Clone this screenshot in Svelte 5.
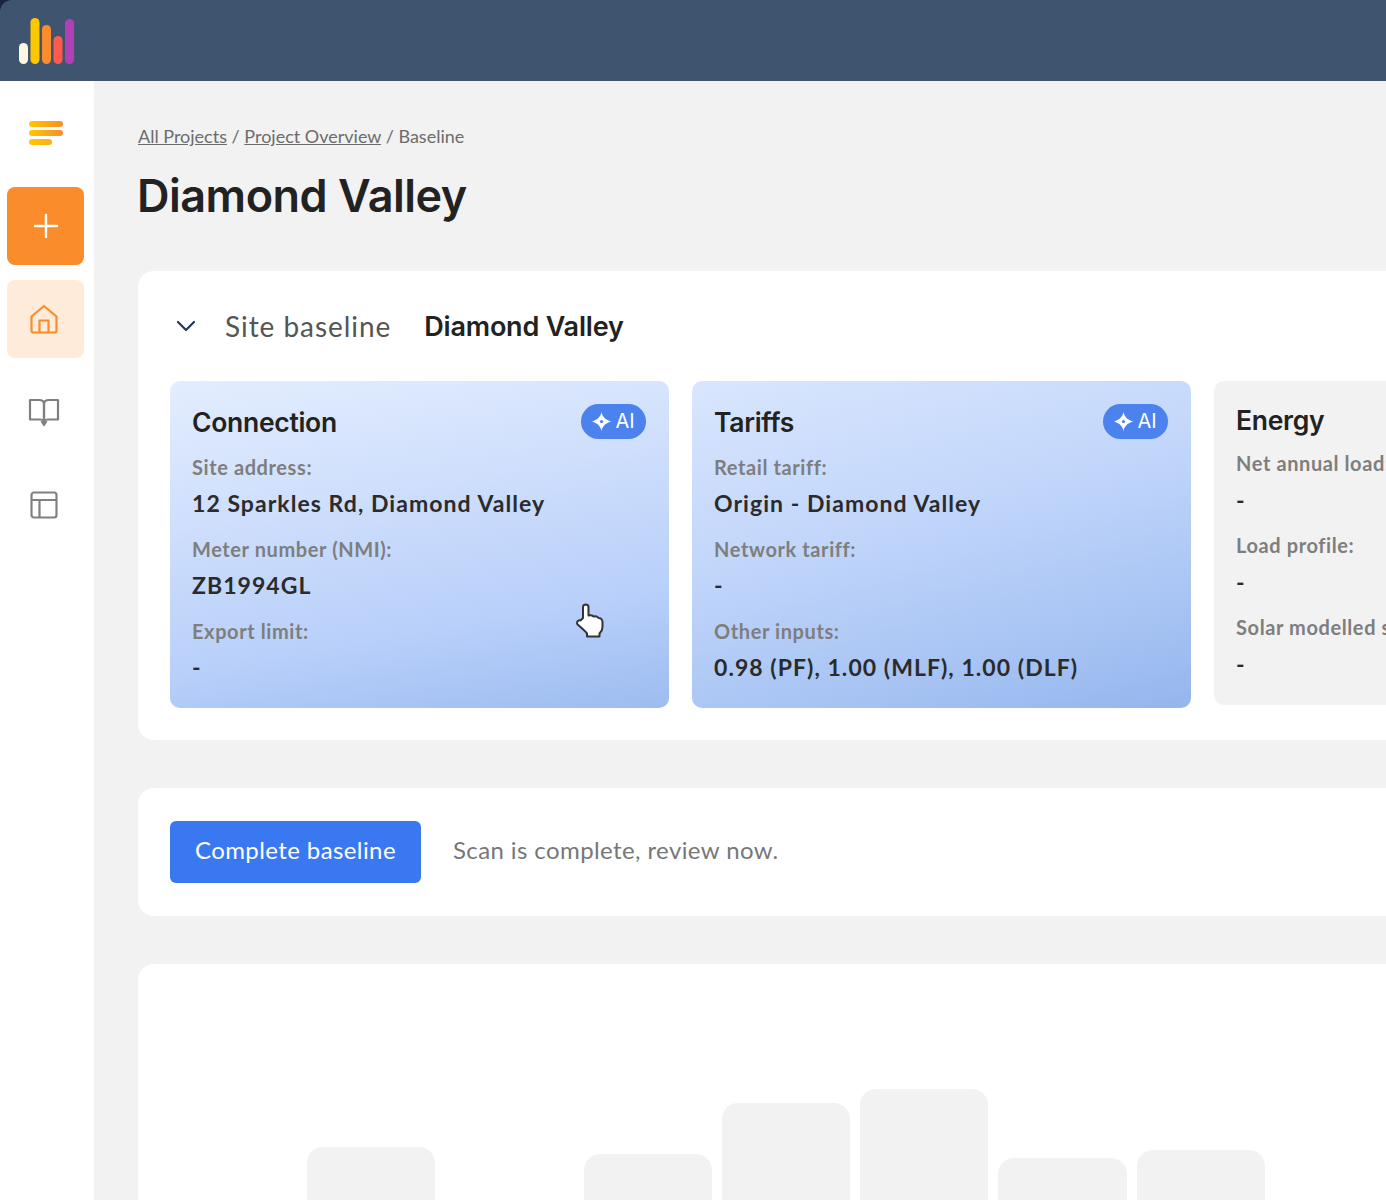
<script lang="ts">
	const cards = [
		{
			title: 'Connection',
			ai: true,
			rows: [
				['Site address:', '12 Sparkles Rd, Diamond Valley'],
				['Meter number (NMI):', 'ZB1994GL'],
				['Export limit:', '-']
			]
		},
		{
			title: 'Tariffs',
			ai: true,
			rows: [
				['Retail tariff:', 'Origin - Diamond Valley'],
				['Network tariff:', '-'],
				['Other inputs:', '0.98 (PF), 1.00 (MLF), 1.00 (DLF)']
			]
		},
		{
			title: 'Energy',
			ai: false,
			rows: [
				['Net annual load:', '-'],
				['Load profile:', '-'],
				['Solar modelled size:', '-']
			]
		}
	];

	// tops of the placeholder bars are measured from the chart floor
	const bars = [153, 0, 146, 197, 211, 142, 150];
</script>

<div class="page">
	<header class="topbar">
		<svg class="logo" width="56" height="46" viewBox="0 0 56 46">
			<rect x="0" y="25" width="9" height="21" rx="4.5" fill="#fdf6e3" />
			<rect x="11.500" y="0" width="9" height="46" rx="4.5" fill="#ffc700" />
			<rect x="23" y="7" width="9" height="39" rx="4.500" fill="#fb8c2b" />
			<rect x="34.500" y="18" width="9" height="28" rx="4.500" fill="#ff5a4d" />
			<rect x="46" y="1" width="9" height="45" rx="4.500" fill="#b13fb5" />
		</svg>
	</header>

	<div class="body">
		<nav class="sidebar">
			<div class="menu">
				<span></span>
				<span></span>
				<span class="short"></span>
			</div>
			<button class="side-btn add" aria-label="Add">
				<svg width="26" height="26" viewBox="0 0 26 26" fill="none" stroke="#fff" stroke-width="2.400" stroke-linecap="round">
					<path d="M13 2v22M2 13h22" />
				</svg>
			</button>
			<button class="side-btn home" aria-label="Home">
				<svg width="30" height="32" viewBox="0 0 30 32" fill="none" stroke="#fb8c2b" stroke-width="2.200" stroke-linejoin="round">
					<path d="M2.500 13.500 15 3l12.500 10.500v14a2 2 0 0 1-2 2h-21a2 2 0 0 1-2-2z" />
					<path d="M10.500 29.500V17.500h9v12" />
				</svg>
			</button>
			<button class="side-btn plain" aria-label="Guide">
				<svg width="32" height="30" viewBox="0 0 32 30" fill="none" stroke="#808080" stroke-width="2.200" stroke-linejoin="round">
					<path d="M2 3h9c3 0 5 1.500 5 4v18c0-1.500-2-2.500-4-2.500H2z" />
					<path d="M30 3h-9c-3 0-5 1.500-5 4v18c0-1.500 2-2.500 4-2.500h10z" />
					<path d="M13.500 24 16 28l2.500-4" />
				</svg>
			</button>
			<button class="side-btn plain" aria-label="Layout">
				<svg width="30" height="30" viewBox="0 0 30 30" fill="none" stroke="#808080" stroke-width="2.200">
					<rect x="2.500" y="2.500" width="25" height="25" rx="2.500" />
					<path d="M2.500 10h25M10.500 10v17.500" />
				</svg>
			</button>
		</nav>

		<main class="main">
			<p class="crumbs"><a href="#top">All Projects</a> / <a href="#top">Project Overview</a> / Baseline</p>
			<h1>Diamond Valley</h1>

			<section class="panel baseline">
				<div class="baseline-head">
					<svg width="20" height="12" viewBox="0 0 20 12" fill="none" stroke="#22395a" stroke-width="2.200" stroke-linecap="round" stroke-linejoin="round">
						<path d="M2 2l8 8 8-8" />
					</svg>
					<span class="label">Site baseline</span>
					<span class="site">Diamond Valley</span>
				</div>

				<div class="cards">
					{#each cards as card}
						<article class="card" class:blue={card.ai}>
							<div class="card-head">
								<h2>{card.title}</h2>
								{#if card.ai}
									<span class="ai">
										<svg width="19" height="19" viewBox="0 0 19 19">
											<path fill="#fff" d="M9.500 0c1 4.800 3.500 7.500 9.500 9.500-6 2-8.500 4.700-9.500 9.500-1-4.800-3.500-7.500-9.500-9.500 6-2 8.500-4.700 9.500-9.500z" />
											<circle cx="9.500" cy="9.500" r="1.600" fill="#4b82ee" />
										</svg>
										AI
									</span>
								{/if}
							</div>
							{#each card.rows as row}
								<div class="field">{row[0]}</div>
								<div class="value">{row[1]}</div>
							{/each}
						</article>
					{/each}
				</div>

				<svg class="cursor" width="30" height="36" viewBox="0 0 30 36" stroke="#333" stroke-width="2" stroke-linejoin="round" fill="#fff">
					<path d="M8 4c0-3.500 5.500-3.500 5.500 0v8.500c2.500-.5 4 0 5 1 2-.5 4 0 5 1.500 2 0 4 1.500 4 4v5c0 3-1.500 5-3 6.500v3H12v-3c-3-3.500-6-6-9.500-9-1.500-2 .5-5 3-4L8 15z" />
				</svg>
			</section>

			<section class="panel action">
				<button class="primary">Complete baseline</button>
				<span class="note">Scan is complete, review now.</span>
			</section>

			<section class="panel chart">
				{#each bars as h}
					<div class="bar" style="height: {h}px"></div>
				{/each}
			</section>
		</main>
	</div>
</div>

<style>
	:global(body) {
		margin: 0;
	}

	.page {
		width: 1386px;
		height: 1200px;
		overflow: hidden;
		background: #1b2342;
		font-family: Lato, 'Open Sans', sans-serif;
		color: #222;
	}

	.topbar {
		height: 81px;
		background: #3f556f;
		border-top-left-radius: 12px;
		display: flex;
		align-items: flex-start;
		padding: 18px 0 0 19px;
		box-sizing: border-box;
	}

	.body {
		display: flex;
		height: 1119px;
	}

	.sidebar {
		width: 94px;
		flex: none;
		background: #fff;
		display: flex;
		flex-direction: column;
		align-items: center;
		padding-top: 40px;
		box-sizing: border-box;
	}

	.menu {
		width: 34px;
		height: 24px;
		margin: 0 3px 42px 0;
		display: flex;
		flex-direction: column;
		gap: 3px;
	}

	.menu span {
		height: 6px;
		border-radius: 3px;
		background: linear-gradient(90deg, #ffc700, #fb8c2b);
	}

	.menu .short {
		width: 23px;
		background: linear-gradient(90deg, #ffc700, #fcae1c);
	}

	.side-btn {
		width: 77px;
		height: 78px;
		border: 0;
		padding: 0;
		border-radius: 8px;
		display: flex;
		align-items: center;
		justify-content: center;
		background: none;
		margin-right: 3px;
	}

	.add {
		background: #fb8c2b;
		margin-bottom: 15px;
	}

	.home {
		background: #feebd9;
		margin-bottom: 15px;
	}

	.plain {
		margin-bottom: 15px;
	}

	.home svg,
	.plain svg {
		margin-right: 4px;
	}

	.main {
		flex: 1;
		min-width: 0;
		background: #f2f2f2;
		padding: 45px 0 0 44px;
	}

	.crumbs {
		margin: 0;
		font-size: 18px;
		line-height: 20px;
		color: #6c6c6c;
	}

	.crumbs a {
		color: inherit;
	}

	h1 {
		margin: 24px 0 49px -1px;
		font-family: Inter, sans-serif;
		font-size: 45px;
		line-height: 52px;
		font-weight: 600;
		letter-spacing: -0.5px;
		color: #222;
	}

	.panel {
		width: 1400px;
		background: #fff;
		border-radius: 16px;
		box-sizing: border-box;
		margin-bottom: 48px;
	}

	.baseline {
		height: 469px;
		padding: 37px 0 0 32px;
		position: relative;
	}

	.baseline-head {
		display: flex;
		align-items: center;
		height: 36px;
		margin-bottom: 37px;
		padding-left: 6px;
	}

	.label {
		margin-left: 29px;
		font-size: 28px;
		letter-spacing: 0.95px;
		color: #555;
	}

	.site {
		margin-left: 33px;
		font-family: Inter, sans-serif;
		font-size: 27px;
		font-weight: 600;
		letter-spacing: -0.2px;
		color: #222;
	}

	.cards {
		display: flex;
		gap: 23px;
		align-items: flex-start;
	}

	.card {
		width: 499px;
		flex: none;
		height: 324px;
		padding: 22px 23px 0 22px;
		box-sizing: border-box;
		border-radius: 10px;
		background: #f2f2f2;
	}

	.card.blue {
		height: 327px;
		padding-top: 24px;
		background: linear-gradient(170deg, #e3edfe 0%, #cfdffc 35%, #b9d0fa 70%, #9dbcf1 100%);
	}

	.card:nth-child(2) {
		background: linear-gradient(165deg, #d9e6fd 0%, #c3d7fb 40%, #a9c5f4 75%, #94b5ed 100%);
	}

	.card-head {
		display: flex;
		align-items: center;
		justify-content: space-between;
		height: 34px;
		margin-bottom: 14px;
	}

	.blue .card-head {
		margin-bottom: 16px;
	}

	h2 {
		margin: 0;
		font-family: Inter, sans-serif;
		font-size: 26.500px;
		line-height: 34px;
		font-weight: 600;
		letter-spacing: -0.3px;
		color: #222;
	}

	.ai {
		width: 65px;
		height: 35px;
		margin-top: -2px;
		border-radius: 18px;
		background: #4b82ee;
		color: #fff;
		font-size: 20px;
		display: flex;
		align-items: center;
		justify-content: center;
		gap: 4px;
		font-family: Inter, sans-serif;
	}

	.field {
		font-size: 20px;
		line-height: 24px;
		font-weight: 700;
		letter-spacing: 0.6px;
		color: #7e7e7e;
		margin-bottom: 10px;
		white-space: nowrap;
	}

	.blue .field {
		margin-bottom: 9px;
	}

	.value {
		font-size: 23px;
		line-height: 30px;
		font-weight: 700;
		letter-spacing: 1.05px;
		color: #2b2b2b;
		margin-bottom: 18px;
		white-space: nowrap;
	}

	.blue .value {
		margin-bottom: 19px;
	}

	.cursor {
		position: absolute;
		left: 437px;
		top: 332px;
	}

	.action {
		height: 128px;
		padding: 0 0 0 32px;
		display: flex;
		align-items: center;
		gap: 32px;
	}

	.primary {
		width: 251px;
		height: 62px;
		border: 0;
		padding: 0 0 5px;
		border-radius: 6px;
		background: #3a78f2;
		color: #fff;
		font-family: Lato, sans-serif;
		font-size: 24px;
		letter-spacing: 0.4px;
	}

	.note {
		margin-bottom: 6px;
		font-size: 24px;
		letter-spacing: 0.4px;
		color: #777;
	}

	.chart {
		height: 336px;
		margin: 0;
		padding-left: 169px;
		display: flex;
		align-items: flex-end;
		gap: 10px;
	}

	.bar {
		width: 128.300px;
		flex: none;
		background: #f2f2f2;
		border-radius: 16px 16px 0 0;
	}
</style>
